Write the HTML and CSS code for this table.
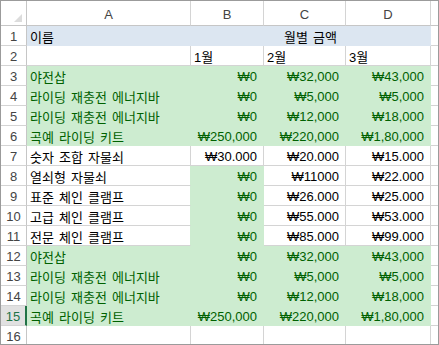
FILE: index.html
```html
<!DOCTYPE html>
<html lang="ko">
<head>
<meta charset="utf-8">
<link rel="stylesheet" href="styles.css">
</head>
<body>
<div class="sheet">
  <div class="corner"><span class="tri"></span></div>
  <div class="colh">A</div><div class="colh">B</div><div class="colh">C</div><div class="colh">D</div><div class="colh pad"></div>

  <div class="rowh">1</div><div class="c blue">이름</div><div class="c blue span3 mid">월별 금액</div><div class="c pad"></div>
  <div class="rowh">2</div><div class="c"></div><div class="c">1월</div><div class="c">2월</div><div class="c">3월</div><div class="c pad"></div>

  <div class="rowh">3</div><div class="c g">야전삽</div><div class="c g n">₩0</div><div class="c g n">₩32,000</div><div class="c g n">₩43,000</div><div class="c pad"></div>
  <div class="rowh">4</div><div class="c g">라이딩 재충전 에너지바</div><div class="c g n">₩0</div><div class="c g n">₩5,000</div><div class="c g n">₩5,000</div><div class="c pad"></div>
  <div class="rowh">5</div><div class="c g">라이딩 재충전 에너지바</div><div class="c g n">₩0</div><div class="c g n">₩12,000</div><div class="c g n">₩18,000</div><div class="c pad"></div>
  <div class="rowh">6</div><div class="c g">곡예 라이딩 키트</div><div class="c g n">₩250,000</div><div class="c g n">₩220,000</div><div class="c g n">₩1,80,000</div><div class="c pad"></div>
  <div class="rowh">7</div><div class="c">숫자 조합 자물쇠</div><div class="c n">₩30.000</div><div class="c n">₩20.000</div><div class="c n">₩15.000</div><div class="c pad"></div>
  <div class="rowh">8</div><div class="c gr">열쇠형 자물쇠</div><div class="c g n">₩0</div><div class="c n">₩11000</div><div class="c n">₩22.000</div><div class="c pad"></div>
  <div class="rowh">9</div><div class="c gr">표준 체인 클램프</div><div class="c g n">₩0</div><div class="c n">₩26.000</div><div class="c n">₩25.000</div><div class="c pad"></div>
  <div class="rowh">10</div><div class="c gr">고급 체인 클램프</div><div class="c g n">₩0</div><div class="c n">₩55.000</div><div class="c n">₩53.000</div><div class="c pad"></div>
  <div class="rowh">11</div><div class="c gr">전문 체인 클램프</div><div class="c g n">₩0</div><div class="c n">₩85.000</div><div class="c n">₩99.000</div><div class="c pad"></div>
  <div class="rowh">12</div><div class="c g">야전삽</div><div class="c g n">₩0</div><div class="c g n">₩32,000</div><div class="c g n">₩43,000</div><div class="c pad"></div>
  <div class="rowh">13</div><div class="c g">라이딩 재충전 에너지바</div><div class="c g n">₩0</div><div class="c g n">₩5,000</div><div class="c g n">₩5,000</div><div class="c pad"></div>
  <div class="rowh">14</div><div class="c g">라이딩 재충전 에너지바</div><div class="c g n">₩0</div><div class="c g n">₩12,000</div><div class="c g n">₩18,000</div><div class="c pad"></div>
  <div class="rowh sel">15</div><div class="c g">곡예 라이딩 키트</div><div class="c g n">₩250,000</div><div class="c g n">₩220,000</div><div class="c g n">₩1,80,000</div><div class="c pad"></div>
  <div class="rowh">16</div><div class="c"></div><div class="c"></div><div class="c"></div><div class="c"></div><div class="c pad"></div>
</div>
</body>
</html>
```

FILE: styles.css
```css
* { box-sizing: border-box; }
html, body { margin: 0; padding: 0; background: #fff; }
body {
  font-family: "Liberation Sans", "Noto Sans CJK KR", sans-serif;
  font-size: 13px;
  color: #000;
}
.sheet {
  width: 439px;
  height: 345px;
  border: 1px solid #9b9b9b;
  overflow: hidden;
  display: grid;
  grid-template-columns: 26px 164px 73px 82px 85px 7px;
  grid-template-rows: 25px;
  grid-auto-rows: 20px;
}
.corner {
  position: relative;
  border-right: 1px solid #c6c6c6;
  border-bottom: 1px solid #c6c6c6;
}
.tri {
  position: absolute;
  right: 4px;
  bottom: 3px;
  width: 0;
  height: 0;
  border-left: 8px solid transparent;
  border-bottom: 8px solid #dcdcdc;
}
.colh {
  display: flex;
  align-items: center;
  justify-content: center;
  padding-top: 2px;
  color: #444;
  border-right: 1px solid #d4d4d4;
  border-bottom: 1px solid #c6c6c6;
}
.colh.pad { border-right: none; }
.rowh {
  display: flex;
  align-items: center;
  justify-content: center;
  padding-top: 2px;
  color: #444;
  border-right: 1px solid #c6c6c6;
  border-bottom: 1px solid #d4d4d4;
}
.rowh.sel {
  background: #e1e1e1;
  color: #217346;
  border-right: 2px solid #217346;
}
.c {
  display: flex;
  align-items: center;
  padding: 2px 3px 0 3px;
  white-space: nowrap;
  word-spacing: 1.5px;
  border-right: 1px solid #d4d4d4;
  border-bottom: 1px solid #d4d4d4;
}
.c.pad { border-right: none; padding: 0; }
.c.n { justify-content: flex-end; padding-right: 6px; }
.c.blue { background: #dce6f1; border-color: #dce6f1; }
.span3 { grid-column: span 3; }
.mid { justify-content: center; }
.c.g { background: #cdecd0; border-color: #cdecd0; color: #006100; }
.c.gr { border-right-color: #cdecd0; }
```
